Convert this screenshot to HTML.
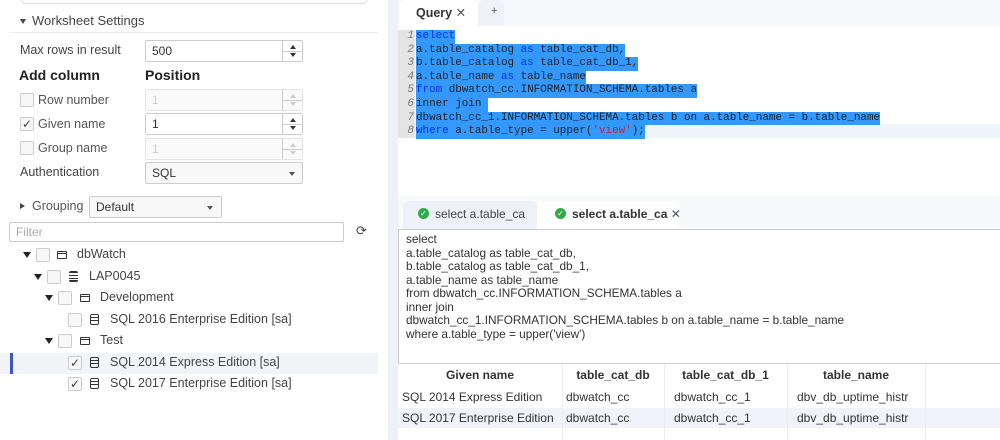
<!DOCTYPE html>
<html><head><meta charset="utf-8"><style>
*{box-sizing:border-box;margin:0;padding:0}
body{width:1000px;height:440px;overflow:hidden;background:#fff;font-family:"Liberation Sans",sans-serif;font-size:12px;color:#333;position:relative}
.a{position:absolute}
.cb{position:absolute;width:14px;height:14px;border:1px solid #ccc;border-radius:2px;background:#f7f7f7}
.inp{position:absolute;border:1px solid #ccc;border-radius:2px;background:#fff;padding-left:6px;line-height:20px}
.spin{position:absolute;right:0;top:0;width:20px;height:100%;border-left:1px solid #ccc}
.spin:after{content:"";position:absolute;left:0;right:0;top:50%;border-top:1px solid #ccc}
.up,.dn{position:absolute;left:7px;width:0;height:0;border-left:3px solid transparent;border-right:3px solid transparent}
.up{top:4px;border-bottom:4px solid #333}.dn{bottom:4px;border-top:4px solid #333}
.dis{background:#fafafa;border-color:#e4e4e4;color:#ccc}
.dis .up{border-bottom-color:#ccc}.dis .dn{border-top-color:#ccc}
.tri{position:absolute;width:0;height:0;border-left:4px solid transparent;border-right:4px solid transparent;border-top:6px solid #222}
.code{position:absolute;left:416px;font-family:"Liberation Mono",monospace;font-size:10.9px;line-height:13.6px;white-space:pre;background:#3399ff;color:#222}
.ln{position:absolute;left:400px;width:14px;text-align:right;font-family:"Liberation Mono",monospace;font-style:italic;font-size:11px;color:#777;line-height:13.6px}
.k{color:#0033ee}
.r{color:#c22}
.th{position:absolute;top:368px;font-weight:bold;text-align:center;font-size:12px}
.td{position:absolute;font-size:12px}
.chk{font-size:12px;color:#444;line-height:12px;text-align:center}
.db{position:absolute;width:9px;height:11px;border:1.5px solid #333;border-radius:2px}
.db:before,.db:after{content:"";position:absolute;left:0;right:0;border-top:1.5px solid #333}
.db:before{top:2px}.db:after{top:5px}
.fold{position:absolute;width:10px;height:8px;border:1.3px solid #333;border-radius:1px}
.fold:before{content:"";position:absolute;left:-1px;right:-1px;top:1px;border-top:1.3px solid #333}
</style></head><body>
<div class="a" style="left:20px;top:-10px;width:348px;height:14px;border:1px solid #ddd;border-radius:6px"></div>
<div class="tri" style="left:20px;top:19px;border-left-width:3px;border-right-width:3px;border-top-width:5px;border-top-color:#444"></div>
<div class="a" style="left:32px;top:13px;font-size:13px;color:#444">Worksheet Settings</div>
<div class="a" style="left:9px;top:32px;width:370px;border-top:1px solid #eee"></div>
<div class="a" style="left:20px;top:43px;font-size:12.5px;color:#444">Max rows in result</div>
<div class="inp" style="left:145px;top:40px;width:158px;height:22px">500<div class="spin"><i class="up"></i><i class="dn"></i></div></div>
<div class="a" style="left:19px;top:67px;font-size:14px;font-weight:bold;color:#222">Add column</div>
<div class="a" style="left:145px;top:67px;font-size:14px;font-weight:bold;color:#222">Position</div>
<div class="cb" style="left:20px;top:93px"></div>
<div class="a" style="left:38px;top:93px;font-size:12.5px;color:#555">Row number</div>
<div class="inp dis" style="left:145px;top:89px;width:158px;height:22px">1<div class="spin"><i class="up"></i><i class="dn"></i></div></div>
<div class="cb chk" style="left:20px;top:117px">✓</div>
<div class="a" style="left:38px;top:117px;font-size:12.5px;color:#555">Given name</div>
<div class="inp" style="left:145px;top:113px;width:158px;height:22px">1<div class="spin"><i class="up"></i><i class="dn"></i></div></div>
<div class="cb" style="left:20px;top:141px"></div>
<div class="a" style="left:38px;top:141px;font-size:12.5px;color:#555">Group name</div>
<div class="inp dis" style="left:145px;top:138px;width:158px;height:22px">1<div class="spin"><i class="up"></i><i class="dn"></i></div></div>
<div class="a" style="left:20px;top:165px;font-size:12.5px;color:#444">Authentication</div>
<div class="inp" style="left:145px;top:162px;width:158px;height:22px;background:#f8f8f8">SQL<div class="tri" style="left:143px;top:9px;border-left-width:3px;border-right-width:3px;border-top-width:4px;border-top-color:#555"></div></div>
<div class="a" style="left:20px;top:203px;width:0;height:0;border-top:3px solid transparent;border-bottom:3px solid transparent;border-left:5px solid #444"></div>
<div class="a" style="left:32px;top:199px;font-size:12.5px;color:#555">Grouping</div>
<div class="inp" style="left:89px;top:196px;width:133px;height:22px;background:#f8f8f8">Default<div class="tri" style="left:117px;top:9px;border-left-width:3px;border-right-width:3px;border-top-width:4px;border-top-color:#555"></div></div>
<div class="inp" style="left:9px;top:222px;width:335px;height:20px;color:#aaa;line-height:18px">Filter</div>
<div class="a" style="left:356px;top:223px;font-size:13px;color:#444">⟳</div>
<div class="a" style="left:0;top:353px;width:378px;height:21px;background:#f3f4f8"></div>
<div class="a" style="left:10px;top:353px;width:3px;height:21px;background:#3a56c8"></div>
<div class="tri" style="left:23px;top:252px"></div><div class="cb" style="left:36px;top:248px"></div><div class="fold" style="left:57px;top:251px"></div><div class="a" style="left:77px;top:247px;font-size:12.5px;color:#444">dbWatch</div>
<div class="tri" style="left:34px;top:274px"></div><div class="cb" style="left:47px;top:270px"></div><div class="db" style="left:69px;top:271px;border:none;border-top:2px solid #333;border-bottom:2px solid #333"></div><div class="a" style="left:89px;top:269px;font-size:12.5px;color:#444">LAP0045</div>
<div class="tri" style="left:45px;top:295px"></div><div class="cb" style="left:58px;top:291px"></div><div class="fold" style="left:80px;top:294px"></div><div class="a" style="left:100px;top:290px;font-size:12.5px;color:#444">Development</div>
<div class="cb" style="left:68px;top:313px"></div><div class="db" style="left:90px;top:314px"></div><div class="a" style="left:110px;top:312px;font-size:12.5px;color:#444">SQL 2016 Enterprise Edition [sa]</div>
<div class="tri" style="left:45px;top:338px"></div><div class="cb" style="left:58px;top:334px"></div><div class="fold" style="left:80px;top:337px"></div><div class="a" style="left:100px;top:333px;font-size:12.5px;color:#444">Test</div>
<div class="cb chk" style="left:68px;top:356px">✓</div><div class="db" style="left:90px;top:357px"></div><div class="a" style="left:110px;top:355px;font-size:12.5px;color:#444">SQL 2014 Express Edition [sa]</div>
<div class="cb chk" style="left:68px;top:377px">✓</div><div class="db" style="left:90px;top:378px"></div><div class="a" style="left:110px;top:376px;font-size:12.5px;color:#444">SQL 2017 Enterprise Edition [sa]</div>
<div class="a" style="left:388px;top:0;width:10px;height:440px;background:#eef1f8"></div>
<div class="a" style="left:398px;top:0;width:602px;height:26px;background:#f7f8fb"></div>
<div class="a" style="left:400px;top:0;width:78px;height:26px;background:#fff;border-radius:6px 6px 0 0"></div>
<div class="a" style="left:416px;top:5px;font-size:12.5px;font-weight:bold;color:#333">Query <span style="font-weight:normal;color:#555">✕</span></div>
<div class="a" style="left:478px;top:0;width:26px;height:26px;background:#f0f2f7;border-radius:6px 6px 0 0"></div>
<div class="a" style="left:491px;top:5px;font-size:11px;color:#555">+</div>
<div class="a" style="left:398px;top:30px;width:17px;height:108px;background:#e4e4e4"></div>
<div class="a" style="left:415px;top:124px;width:585px;height:14px;background:#eef6fb"></div>
<div class="ln" style="top:30px">1<br>2<br>3<br>4<br>5<br>6<br>7<br>8</div>
<div class="code" style="top:30px"><span class="k">select</span></div>
<div class="code" style="top:43.6px">a.table_catalog <span class="k">as</span> table_cat_db,</div>
<div class="code" style="top:57.2px">b.table_catalog <span class="k">as</span> table_cat_db_1,</div>
<div class="code" style="top:70.8px">a.table_name <span class="k">as</span> table_name</div>
<div class="code" style="top:84.4px"><span class="k">from</span> dbwatch_cc.INFORMATION_SCHEMA.tables a</div>
<div class="code" style="top:98px">inner join </div>
<div class="code" style="top:111.6px">dbwatch_cc_1.INFORMATION_SCHEMA.tables b on a.table_name = b.table_name</div>
<div class="code" style="top:125.2px"><span class="k">where</span> a.table_type = upper(<span class="r">'view'</span>);</div>
<div class="a" style="left:398px;top:196px;width:602px;height:33px;background:#f8f9fb"></div>
<div class="a" style="left:403px;top:201px;width:134px;height:28px;background:#eef1f7;border-radius:6px 6px 0 0"></div>
<div class="a" style="left:537px;top:201px;width:142px;height:28px;background:#fff;border-radius:6px 6px 0 0"></div>
<div class="a" style="left:418px;top:208px;width:11px;height:11px;border-radius:50%;background:#2eaa4a;color:#fff;font-size:8px;line-height:11px;text-align:center">✓</div>
<div class="a" style="left:435px;top:207px;font-size:12px;color:#444">select a.table_ca</div>
<div class="a" style="left:555px;top:208px;width:11px;height:11px;border-radius:50%;background:#2eaa4a;color:#fff;font-size:8px;line-height:11px;text-align:center">✓</div>
<div class="a" style="left:572px;top:207px;font-size:12px;font-weight:bold;color:#333">select a.table_ca <span style="font-weight:normal;color:#555">✕</span></div>
<div class="a" style="left:398px;top:229px;width:604px;height:135px;border:1px solid #ccc;border-right:none;background:#fff;padding:3px 7px;font-size:11.8px;line-height:13.5px;color:#333;white-space:pre">select
a.table_catalog as table_cat_db,
b.table_catalog as table_cat_db_1,
a.table_name as table_name
from dbwatch_cc.INFORMATION_SCHEMA.tables a
inner join
dbwatch_cc_1.INFORMATION_SCHEMA.tables b on a.table_name = b.table_name
where a.table_type = upper('view')</div>
<div class="a" style="left:398px;top:408px;width:602px;height:20px;background:#f0f3f9"></div>
<div class="a" style="left:562px;top:364px;height:76px;border-left:1px solid #eee"></div>
<div class="a" style="left:664px;top:364px;height:76px;border-left:1px solid #eee"></div>
<div class="a" style="left:787px;top:364px;height:76px;border-left:1px solid #eee"></div>
<div class="a" style="left:925px;top:364px;height:76px;border-left:1px solid #eee"></div>
<div class="th" style="left:398px;width:164px">Given name</div>
<div class="th" style="left:562px;width:102px">table_cat_db</div>
<div class="th" style="left:664px;width:123px">table_cat_db_1</div>
<div class="th" style="left:787px;width:138px">table_name</div>
<div class="td" style="left:402px;top:390px">SQL 2014 Express Edition</div>
<div class="td" style="left:566px;top:390px">dbwatch_cc</div>
<div class="td" style="left:674px;top:390px">dbwatch_cc_1</div>
<div class="td" style="left:797px;top:390px">dbv_db_uptime_histr</div>
<div class="td" style="left:402px;top:411px">SQL 2017 Enterprise Edition</div>
<div class="td" style="left:566px;top:411px">dbwatch_cc</div>
<div class="td" style="left:674px;top:411px">dbwatch_cc_1</div>
<div class="td" style="left:797px;top:411px">dbv_db_uptime_histr</div>
</body></html>
